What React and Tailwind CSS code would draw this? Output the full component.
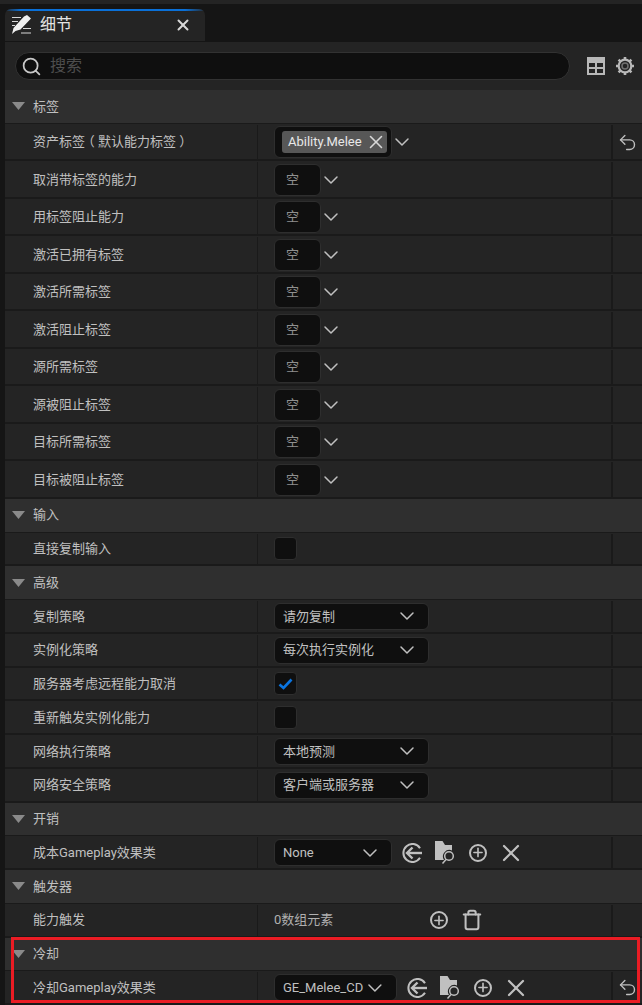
import React from 'react';
import { ChevronDown, Plus, Search, Trash, Undo2, X } from 'lucide-react';

const FONT = "font-['Roboto','Noto_Sans_CJK_SC',sans-serif]";

// 选择资源 arrow inside an open circle
function UseIcon() {
  return (
    <svg width="20" height="20" viewBox="0 0 20 20" fill="none" stroke="#c0c0c0" strokeWidth="2">
      <path d="M18 5.2A9 9 0 1 0 18 14.8" />
      <path d="M10.5 4.5 5 10l5.5 5.5" strokeWidth="2.4" />
      <path d="M5.5 10H20" strokeWidth="2.4" />
    </svg>
  );
}

function BrowseIcon() {
  return (
    <svg width="22" height="23" viewBox="0 0 22 23" fill="none">
      <path d="M1 0h7.5L11 4h7v5.5a6.5 6.5 0 0 0-8 9.5H1z" fill="#c0c0c0" />
      <circle cx="15" cy="15" r="4.3" stroke="#c0c0c0" strokeWidth="1.5" />
      <path d="M12 18.5 8.5 22.5" stroke="#c0c0c0" strokeWidth="1.5" />
    </svg>
  );
}

function AddIcon() {
  return (
    <div className="flex size-[18px] items-center justify-center rounded-full border-2 border-[#c0c0c0]">
      <Plus size={15} strokeWidth={2.8} color="#c0c0c0" />
    </div>
  );
}

function Slot({ children }) {
  return <div className="flex w-[33px] justify-center">{children}</div>;
}

function Section({ title }) {
  return (
    <div className="flex h-[33.75px] items-center border-b border-[#1a1a1a] bg-[#2f2f2f] pl-[7px] text-[13px] text-[#c0c0c0]">
      <svg width="13" height="8" viewBox="0 0 13 8" className="mr-[8px]">
        <path d="M0 0h13L6.5 8z" fill="#8a8a8a" />
      </svg>
      {title}
    </div>
  );
}

function Row({ label, height = 'h-[33.75px]', reset, children }) {
  return (
    <div className={`flex ${height} items-stretch border-b-2 border-[#1a1a1a] bg-[#242424] pt-px text-[13px]`}>
      <div className="flex w-[253px] items-center border-r border-[#1a1a1a] pl-7 text-[#c0c0c0]">{label}</div>
      <div className="flex flex-1 items-center pl-[16px]">{children}</div>
      <div className="flex w-[31px] items-center justify-center border-l-2 border-[#1a1a1a]">
        {reset && <Undo2 size={21} strokeWidth={1.6} color="#c0c0c0" />}
      </div>
    </div>
  );
}

function EmptyTags() {
  return (
    <>
      <div className="flex h-[32px] w-[47px] items-center rounded-md border border-[#2e2e2e] bg-[#0f0f0f] pl-[11px] text-[13px] text-[#8f8f8f]">空</div>
      <ChevronDown size={24} strokeWidth={1.5} color="#c0c0c0" className="-ml-[2px]" />
    </>
  );
}

function Checkbox({ checked }) {
  return (
    <div className="flex size-[23px] items-center justify-center rounded-[4px] border border-[#2e2e2e] bg-[#0f0f0f]">
      {checked && (
        <svg width="15" height="12" viewBox="0 0 15 12" fill="none" stroke="#0a74e0" strokeWidth="2.6">
          <path d="M1.5 6.5 5.5 10 13.5 1.5" />
        </svg>
      )}
    </div>
  );
}

function Select({ text, width = 'w-[155px]' }) {
  return (
    <div className={`flex h-[27px] ${width} items-center justify-between rounded-md border border-[#2e2e2e] bg-[#0f0f0f] pl-[8px] pr-[9px] text-[#c0c0c0]`}>
      <span className="text-[13px]">{text}</span>
      <ChevronDown size={24} strokeWidth={1.5} color="#c0c0c0" />
    </div>
  );
}

function AssetActions() {
  return (
    <div className="ml-[3px] flex items-center">
      <Slot><UseIcon /></Slot>
      <Slot><BrowseIcon /></Slot>
      <Slot><AddIcon /></Slot>
      <Slot><X size={28} strokeWidth={1.9} color="#c0c0c0" /></Slot>
    </div>
  );
}

const tagRows = ['取消带标签的能力', '用标签阻止能力', '激活已拥有标签', '激活所需标签', '激活阻止标签', '源所需标签', '源被阻止标签', '目标所需标签', '目标被阻止标签'];

export default function App() {
  return (
    <div className={`relative h-[1005px] w-[642px] overflow-hidden bg-[#151515] ${FONT}`}>
      <div className="h-1 bg-[#242424]" />

      {/* tab strip */}
      <div className="h-[38px] pl-[5px] pt-[5px]">
        <div className="h-[32px] w-[200px] overflow-hidden rounded-t-md bg-[#242424]">
          <div className="h-[2px] bg-[linear-gradient(90deg,#242c34,#0a70d8_8%,#0a70d8_90%,#242c34)]" />
          <div className="flex h-[27px] items-center pl-[7px] pr-[13px]">
            <svg width="19" height="19" viewBox="0 0 19 19" fill="none" className="mr-[9px]">
              <path d="M0 2.5h9M0 6.5h6M0 10.5h3M9 18h10M11 13.5h8" stroke="#d8d8d8" strokeWidth="1" />
              <path d="M15 0 19 3.5 8.5 14.5 3.5 16 0 19l1.5-6L12 1.5z" fill="#f0f0f0" />
            </svg>
            <span className="flex-1 text-[16px] leading-none text-[#e4e4e4]">细节</span>
            <X size={18} strokeWidth={2.6} color="#d8d8d8" />
          </div>
        </div>
      </div>

      <div className="ml-[5px]">
        {/* search bar */}
        <div className="flex h-[48px] items-center bg-[#242424] pl-[10px]">
          <div className="flex h-[28px] w-[555px] items-center rounded-full border border-[#323232] bg-[#0f0f0f] pl-[5px]">
            <Search size={21} strokeWidth={2} color="#c8c8c8" />
            <span className="ml-[8px] text-[16px] text-[#4d4d4d]">搜索</span>
          </div>
          <svg width="18" height="18" viewBox="0 0 18 18" className="ml-[17px]">
            <path fillRule="evenodd" d="M0 0h18v18H0zM2 6v4h6V6zM10 6v4h6V6zM2 12v4h6v-4zM10 12v4h6v-4z" fill="#b8b8b8" />
          </svg>
          <svg width="20" height="20" viewBox="0 0 20 20" fill="none" className="ml-[10px]" stroke="#b8b8b8">
            <circle cx="10" cy="10" r="6.3" strokeWidth="2.2" />
            <circle cx="10" cy="10" r="3" strokeWidth="1.5" stroke="#707070" />
            <path d="M10 1v3M10 16v3M1 10h3M16 10h3M3.6 3.6l2 2M14.4 14.4l2 2M3.6 16.4l2-2M14.4 5.6l2-2" strokeWidth="2.6" />
          </svg>
        </div>

        <Section title="标签" />
        <Row
          label={<span>资产标签<span className="px-[3.25px] [font-feature-settings:'halt']">（</span>默认能力标签<span className="px-[3.25px] [font-feature-settings:'halt']">）</span></span>}
          height="h-[37.5px]"
          reset
        >
          <div className="flex h-[32px] items-center rounded-md border border-[#2e2e2e] bg-[#0f0f0f] pl-[7px] pr-[4px]">
            <div className="flex h-[22px] items-center gap-[3px] rounded-[3px] bg-[#575757] pl-1.5 text-[#e8e8e8]">
              Ability.Melee
              <X size={22} strokeWidth={1.7} color="#d8d8d8" />
            </div>
          </div>
          <ChevronDown size={24} strokeWidth={1.5} color="#c0c0c0" className="-ml-[2px]" />
        </Row>
        {tagRows.map((label) => (
          <Row key={label} label={label} height="h-[37.5px]">
            <EmptyTags />
          </Row>
        ))}

        <Section title="输入" />
        <Row label="直接复制输入"><Checkbox /></Row>

        <Section title="高级" />
        <Row label="复制策略"><Select text="请勿复制" /></Row>
        <Row label="实例化策略"><Select text="每次执行实例化" /></Row>
        <Row label="服务器考虑远程能力取消"><Checkbox checked /></Row>
        <Row label="重新触发实例化能力"><Checkbox /></Row>
        <Row label="网络执行策略"><Select text="本地预测" /></Row>
        <Row label="网络安全策略"><Select text="客户端或服务器" /></Row>

        <Section title="开销" />
        <Row label="成本Gameplay效果类">
          <Select text="None" width="w-[118px]" />
          <AssetActions />
        </Row>

        <Section title="触发器" />
        <Row label="能力触发">
          <span className="w-[148px] text-[13px] text-[#b0b0b0]">0数组元素</span>
          <Slot><AddIcon /></Slot>
          <Slot><Trash size={22} strokeWidth={2.2} color="#c0c0c0" /></Slot>
        </Row>

        <Section title="冷却" />
        <Row label="冷却Gameplay效果类" reset>
          <Select text="GE_Melee_CD" width="w-[123px]" />
          <AssetActions />
        </Row>
      </div>

      {/* annotation box drawn over the screenshot */}
      <div className="absolute left-[11px] top-[937px] h-[66px] w-[629px] border-[3px] border-[#ea1c24]" />
    </div>
  );
}
